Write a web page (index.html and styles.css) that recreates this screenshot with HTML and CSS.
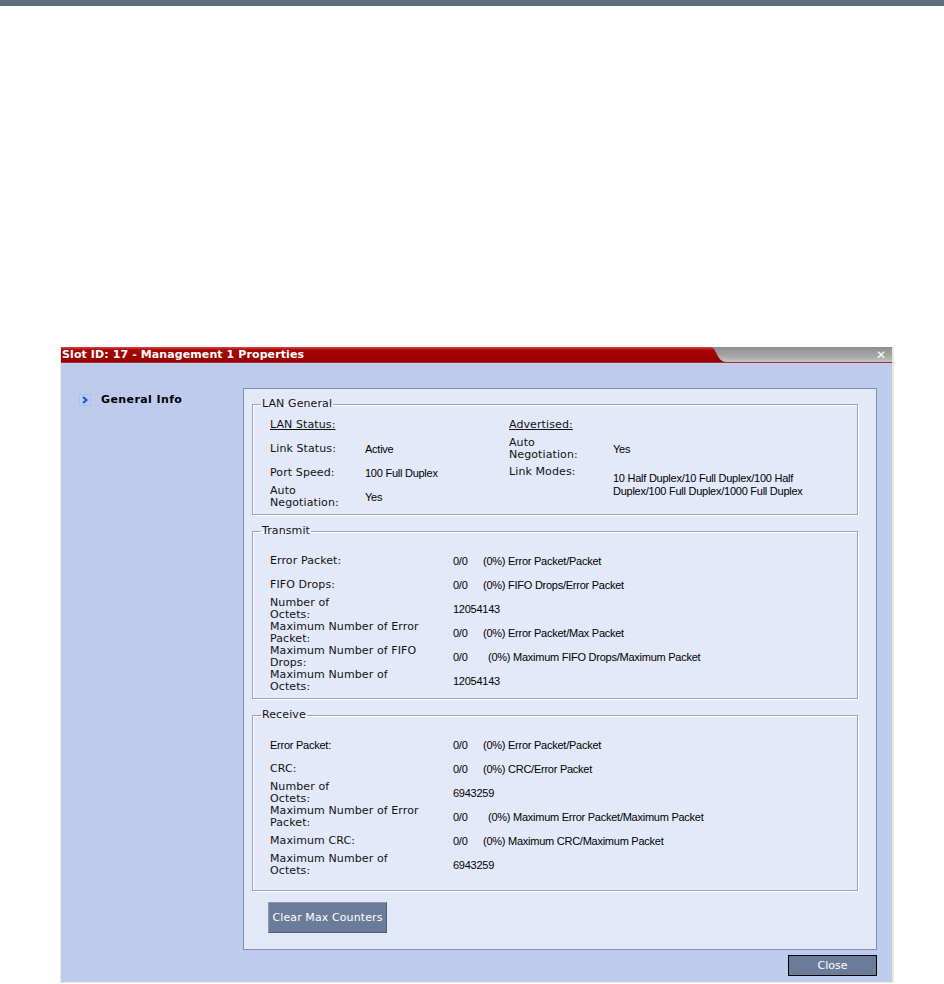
FILE: index.html
```html
<!DOCTYPE html>
<html>
<head>
<meta charset="utf-8">
<link rel="stylesheet" href="styles.css">
</head>
<body>
<div class="topbar"></div>
<div class="dialog">
  <div class="titlebar">
    <div class="title-red"><span class="title-text">Slot ID: 17 - Management 1 Properties</span></div>
    <svg class="title-curve" width="18" height="15" viewBox="0 0 18 15" preserveAspectRatio="none">
      <defs>
        <linearGradient id="rg" x1="0" y1="0" x2="0" y2="1">
          <stop offset="0" stop-color="#d24a4a"/>
          <stop offset="0.2" stop-color="#a80606"/>
          <stop offset="1" stop-color="#980000"/>
        </linearGradient>
      </defs>
      <path d="M0 0 L3 0 C8 0 9 15 18 15 L0 15 Z" fill="url(#rg)"/>
    </svg>
    <div class="title-gray"><span class="close-x">✕</span></div>
  </div>
  <div class="body">
    <div class="nav">
      <div class="nav-item">
        <svg class="chev" width="12" height="12" viewBox="0 0 12 12">
          <rect x="0" y="0" width="12" height="12" fill="#a9c0ee"/>
          <rect x="1" y="1" width="10" height="10" fill="#b9cdf3"/>
          <path d="M4 3 L7.5 6 L4 9" fill="none" stroke="#1f4fc2" stroke-width="2"/>
        </svg>
        <span class="nav-text">General Info</span>
      </div>
    </div>
    <div class="main">
      <div class="panel">
        <fieldset class="group lan">
          <legend>LAN General</legend>
          <div class="lan-grid">
            <div class="lbl ul">LAN Status:</div>
            <div></div>
            <div class="lbl ul">Advertised:</div>
            <div></div>

            <div class="lbl">Link Status:</div>
            <div class="val">Active</div>
            <div class="lbl">Auto<br>Negotiation:</div>
            <div class="val">Yes</div>

            <div class="lbl">Port Speed:</div>
            <div class="val">100 Full Duplex</div>
            <div class="lbl top">Link Modes:</div>
            <div class="val span2">10 Half Duplex/10 Full Duplex/100 Half<br>Duplex/100 Full Duplex/1000 Full Duplex</div>

            <div class="lbl">Auto<br>Negotiation:</div>
            <div class="val">Yes</div>
          </div>
        </fieldset>

        <fieldset class="group tx">
          <legend>Transmit</legend>
          <div class="stat-grid">
            <div class="lbl">Error Packet:</div>
            <div class="val"><span class="ratio">0/0</span>(0%) Error Packet/Packet</div>
            <div class="lbl">FIFO Drops:</div>
            <div class="val"><span class="ratio">0/0</span>(0%) FIFO Drops/Error Packet</div>
            <div class="lbl">Number of<br>Octets:</div>
            <div class="val">12054143</div>
            <div class="lbl">Maximum Number of Error<br>Packet:</div>
            <div class="val"><span class="ratio">0/0</span>(0%) Error Packet/Max Packet</div>
            <div class="lbl">Maximum Number of FIFO<br>Drops:</div>
            <div class="val"><span class="ratio wide">0/0</span>(0%) Maximum FIFO Drops/Maximum Packet</div>
            <div class="lbl">Maximum Number of<br>Octets:</div>
            <div class="val">12054143</div>
          </div>
        </fieldset>

        <fieldset class="group rx">
          <legend>Receive</legend>
          <div class="stat-grid">
            <div class="val">Error Packet:</div>
            <div class="val"><span class="ratio">0/0</span>(0%) Error Packet/Packet</div>
            <div class="lbl">CRC:</div>
            <div class="val"><span class="ratio">0/0</span>(0%) CRC/Error Packet</div>
            <div class="lbl">Number of<br>Octets:</div>
            <div class="val">6943259</div>
            <div class="lbl">Maximum Number of Error<br>Packet:</div>
            <div class="val"><span class="ratio wide">0/0</span>(0%) Maximum Error Packet/Maximum Packet</div>
            <div class="lbl">Maximum CRC:</div>
            <div class="val"><span class="ratio">0/0</span>(0%) Maximum CRC/Maximum Packet</div>
            <div class="lbl">Maximum Number of<br>Octets:</div>
            <div class="val">6943259</div>
          </div>
        </fieldset>

        <button class="btn-clear">Clear Max Counters</button>
      </div>
      <div class="footer">
        <button class="btn-close">Close</button>
      </div>
    </div>
  </div>
</div>
</body>
</html>
```

FILE: styles.css
```css
html, body {
  margin: 0;
  padding: 0;
  background: #ffffff;
  overflow: hidden;
}
.topbar {
  height: 6px;
  background: #5f6e7e;
}
.dialog {
  margin-top: 341px;
  margin-left: 60px;
  width: 831px;
  border-left: 1px solid #eeebdc;
  border-right: 2px solid #ece9d8;
  border-bottom: 1px solid #ece9d8;
  box-shadow: 0 3px 0 #6d6b60;
  background: #bdcbed;
}
.titlebar {
  display: flex;
  height: 15px;
  border-bottom: 1px solid #b22a2a;
}
.title-red {
  flex: 1;
  background: linear-gradient(to bottom, #d24a4a 0, #a80606 3px, #980000 100%);
  display: flex;
  align-items: center;
  padding-left: 1px;
}
.title-text {
  font-family: "DejaVu Sans", Verdana, sans-serif;
  font-weight: bold;
  font-size: 11px;
  line-height: 13px;
  color: #ffffff;
  letter-spacing: 0.1px;
  white-space: nowrap;
}
.title-curve {
  display: block;
  background: linear-gradient(to bottom, #8e8e8e 0, #a6a6a6 60%, #c4c4c4 100%);
}
.title-gray {
  width: 160px;
  background: linear-gradient(to bottom, #8e8e8e 0, #a6a6a6 60%, #c4c4c4 100%);
  display: flex;
  align-items: center;
  justify-content: flex-end;
  padding-right: 6px;
}
.close-x {
  color: #ffffff;
  font-family: "DejaVu Sans", sans-serif;
  font-weight: bold;
  font-size: 12px;
  line-height: 12px;
}
.body {
  display: flex;
}
.nav {
  width: 182px;
  padding-top: 30px;
}
.nav-item {
  display: flex;
  align-items: center;
  padding-left: 18px;
}
.chev {
  display: block;
  margin-right: 10px;
}
.nav-text {
  font-family: "DejaVu Sans", Verdana, sans-serif;
  font-weight: bold;
  font-size: 11px;
  letter-spacing: 0.4px;
  color: #000000;
}
.main {
  width: 634px;
  padding-top: 25px;
}
.panel {
  background: #e3e9f9;
  border: 1px solid #7d8fb4;
  padding: 9px 18px 16px 8px;
}
.group {
  margin: 0;
  border: 1px solid #a3a3a3;
  box-shadow: inset 1px 1px 0 #ffffff, 1px 1px 0 #ffffff;
  padding: 2px 0 6px 8px;
  min-width: 0;
}
.group legend {
  padding: 0 1px;
  font-family: "DejaVu Sans", Verdana, sans-serif;
  font-size: 11px;
  line-height: 12px;
  letter-spacing: 0.1px;
  color: #111111;
}
.group.tx {
  margin-top: 10px;
  padding-top: 11px;
  padding-bottom: 6px;
}
.group.rx {
  margin-top: 10px;
  padding-top: 11px;
  padding-bottom: 14px;
}
.lbl {
  font-family: "DejaVu Sans", Verdana, sans-serif;
  font-size: 11px;
  line-height: 12px;
  letter-spacing: 0.1px;
  color: #111111;
  padding-top: 2px;
}
.val {
  font-family: "Liberation Sans", Arial, sans-serif;
  font-size: 11px;
  line-height: 13px;
  color: #000000;
  letter-spacing: -0.25px;
  padding-top: 2px;
}
.ul {
  text-decoration: underline;
}
.lan-grid {
  margin-left: 9px;
  display: grid;
  grid-template-columns: 95px 144px 104px 1fr;
  grid-auto-rows: 24px;
  align-items: center;
}
.lan-grid .top {
  align-self: start;
  padding-top: 6px;
}
.lan-grid .span2 {
  grid-row: span 2;
  grid-column: 4;
}
.stat-grid {
  margin-left: 9px;
  display: grid;
  grid-template-columns: 183px 1fr;
  grid-auto-rows: 24px;
  align-items: center;
}
.ratio {
  display: inline-block;
  width: 30px;
}
.ratio.wide {
  width: 35px;
}
.btn-clear {
  display: block;
  margin: 11px 0 0 16px;
  width: 119px;
  height: 31px;
  padding: 0;
  background: #6b7b9a;
  border: 1px solid #6b7b9a;
  border-right-color: #4e5e7c;
  border-bottom-color: #4e5e7c;
  border-top-color: #8a98b4;
  border-left-color: #8a98b4;
  color: #ffffff;
  font-family: "DejaVu Sans", Verdana, sans-serif;
  font-size: 11px;
  letter-spacing: 0.1px;
}
.footer {
  display: flex;
  justify-content: flex-end;
  padding: 5px 0 6px 0;
}
.btn-close {
  width: 89px;
  height: 21px;
  padding: 0;
  background: #6b7b9a;
  border: 1px solid #000000;
  color: #ffffff;
  font-family: "DejaVu Sans", Verdana, sans-serif;
  font-size: 11px;
}
```
